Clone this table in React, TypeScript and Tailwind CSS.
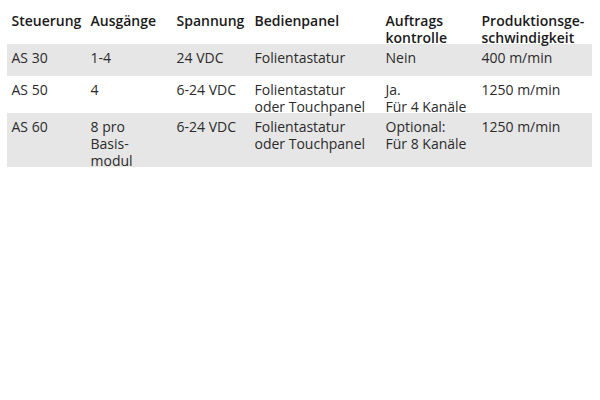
import React from 'react';

type Row = { cells: string[][]; height: string; shaded: boolean };

const headers: string[][] = [
  ['Steuerung'],
  ['Ausgänge'],
  ['Spannung'],
  ['Bedienpanel'],
  ['Auftrags', 'kontrolle'],
  ['Produktionsge-', 'schwindigkeit'],
];

const rows: Row[] = [
  {
    cells: [['AS 30'], ['1-4'], ['24 VDC'], ['Folientastatur'], ['Nein'], ['400 m/min']],
    height: 'h-[32px]',
    shaded: true,
  },
  {
    cells: [
      ['AS 50'],
      ['4'],
      ['6-24 VDC'],
      ['Folientastatur', 'oder Touchpanel'],
      ['Ja.', 'Für 4 Kanäle'],
      ['1250 m/min'],
    ],
    height: 'h-[37px]',
    shaded: false,
  },
  {
    cells: [
      ['AS 60'],
      ['8 pro', 'Basis-', 'modul'],
      ['6-24 VDC'],
      ['Folientastatur', 'oder Touchpanel'],
      ['Optional:', 'Für 8 Kanäle'],
      ['1250 m/min'],
    ],
    height: 'h-[54px]',
    shaded: true,
  },
];

const colWidths = ['w-[79px]', 'w-[86px]', 'w-[78px]', 'w-[131px]', 'w-[96px]', 'w-[115px]'];

// cell text may hang a little into the next row, as in the original
const Lines: React.FC<{ lines: string[] }> = ({ lines }) => (
  <div className="-mb-[10px]">
    {lines.map((line, i) => (
      <div key={i} className="whitespace-nowrap">
        {line}
      </div>
    ))}
  </div>
);

const App: React.FC = () => {
  return (
    <div className="w-[600px] h-[400px] bg-white font-['Open_Sans',sans-serif] text-[14px] leading-[17.4px]">
      <table className="ml-[7px] w-[585px] table-fixed border-collapse">
        <colgroup>
          {colWidths.map((w, i) => (
            <col key={i} className={w} />
          ))}
        </colgroup>
        <thead>
          <tr className="h-[44px]">
            {headers.map((h, i) => (
              <th
                key={i}
                className="align-top text-left font-semibold leading-[17.4px] text-[#1a1a1a] pl-[4.5px] pt-[12px] pb-0"
              >
                <Lines lines={h} />
              </th>
            ))}
          </tr>
        </thead>
        <tbody>
          {rows.map((row, r) => (
            <tr key={r} className={`${row.height} ${row.shaded ? 'bg-[#e6e6e6]' : 'bg-white'}`}>
              {row.cells.map((cell, c) => (
                <td key={c} className="align-top text-[#2b2b2b] pl-[4.5px] pt-[4.5px] pb-0">
                  <Lines lines={cell} />
                </td>
              ))}
            </tr>
          ))}
        </tbody>
      </table>
    </div>
  );
};

export default App;
